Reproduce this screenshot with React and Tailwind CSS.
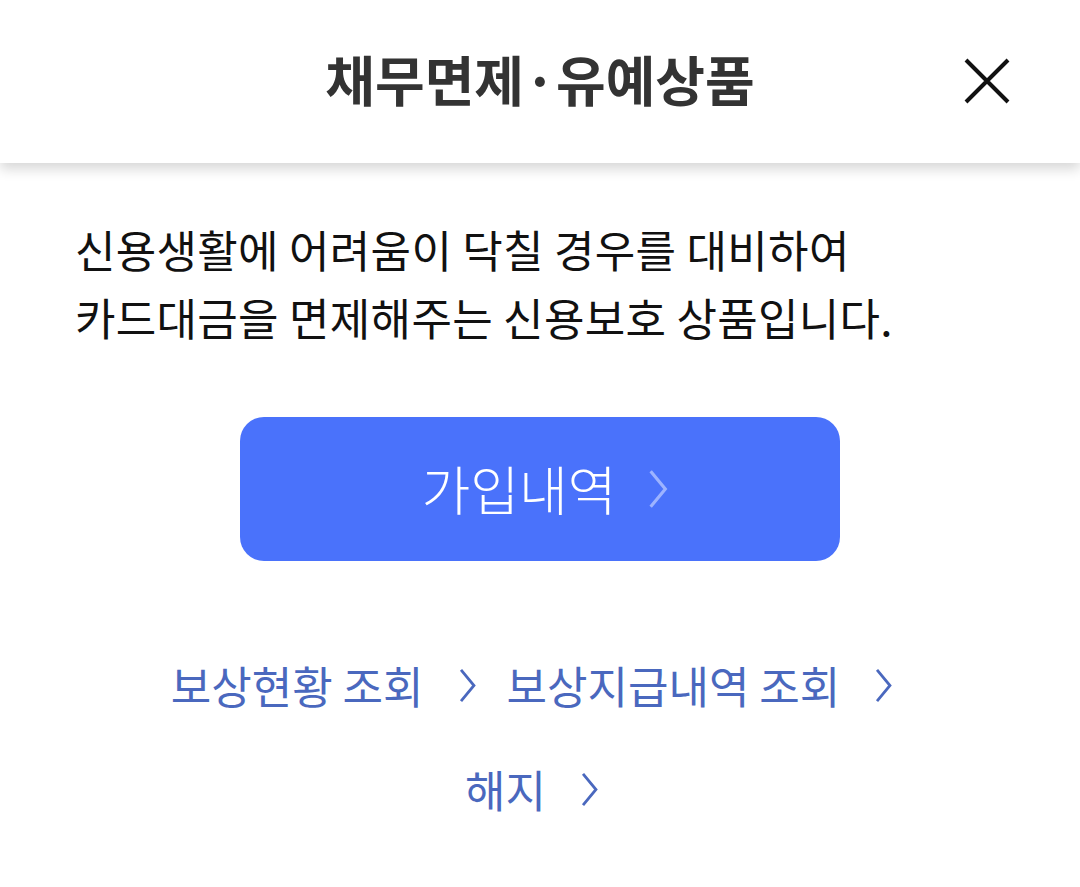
import React from 'react';

const font = { fontFamily: '"Noto Sans CJK KR", "Noto Sans", sans-serif' };

const Chevron = ({ className }) => (
  <svg viewBox="0 0 20 40" fill="none" stroke="currentColor" strokeWidth="3" className={className}>
    <path d="M3 3 L17 20 L3 37" />
  </svg>
);

const LinkItem = ({ label }) => (
  <a href="#" className="flex items-center gap-[34px] text-[#4a68be]">
    <span>{label}</span>
    <Chevron className="w-[19px] h-[37px]" />
  </a>
);

export default function App() {
  return (
    <div className="w-[1080px] h-[887px] bg-white overflow-hidden" style={font}>
      <header className="relative h-[163px] flex items-center justify-center bg-white shadow-[0_6px_12px_rgba(0,0,0,0.16)]">
        <h1 className="text-[54px] font-bold text-[#333] -mt-[6px]">채무면제·유예상품</h1>
        <button className="absolute right-[70px] top-[58px] w-[46px] h-[46px]">
          <svg viewBox="0 0 46 46" stroke="#111" strokeWidth="4" className="w-full h-full">
            <path d="M2 2 L44 44 M44 2 L2 44" />
          </svg>
        </button>
      </header>

      <main className="pt-[52px]">
        <p className="pl-[75px] text-[44px] leading-[68px] text-[#111] tracking-[0.3px]">
          신용생활에 어려움이 닥칠 경우를 대비하여
          <br />
          카드대금을 면제해주는 신용보호 상품입니다.
        </p>

        <div className="flex justify-center mt-[66px]">
          <button className="w-[600px] h-[144px] rounded-[24px] bg-[#4a72fb] flex items-center justify-center gap-[30px] pl-[10px]">
            <span className="text-[53px] font-light text-white">가입내역</span>
            <Chevron className="w-[22px] h-[42px] text-[#9db3ff]" />
          </button>
        </div>

        <div className="flex flex-col items-center mt-[97px] gap-[50px] pr-[16px] text-[44px] leading-[54px]">
          <div className="flex items-center gap-[30px]">
            <LinkItem label="보상현황 조회" />
            <LinkItem label="보상지급내역 조회" />
          </div>
          <LinkItem label="해지" />
        </div>
      </main>
    </div>
  );
}
